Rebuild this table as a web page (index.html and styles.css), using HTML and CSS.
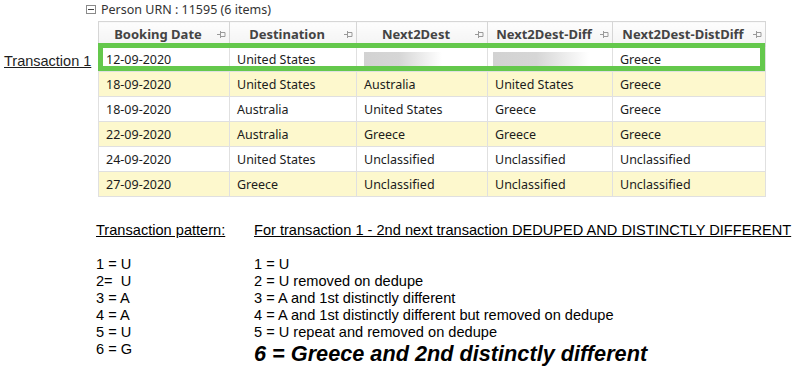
FILE: index.html
```html
<!DOCTYPE html>
<html lang="en">
<head>
    <meta charset="UTF-8">
    <meta name="viewport" content="width=device-width, initial-scale=1.0">
    <title>Transaction pattern</title>
    <link rel="stylesheet" href="styles.css">
</head>
<body>
    <div class="top">
        <div class="side">
            <span class="tx-label">Transaction 1</span>
        </div>
        <div class="main">
            <div class="group-head">
                <span class="toggle"></span>
                <span>Person URN : 11595 (6 items)</span>
            </div>

            <div class="grid-wrap">
                <table class="grid">
                    <colgroup>
                        <col style="width: 131px">
                        <col style="width: 127px">
                        <col style="width: 131px">
                        <col style="width: 125px">
                        <col style="width: 153px">
                    </colgroup>
                    <thead>
                        <tr>
                            <th><div class="th-in"><span>Booking Date</span><svg class="pin" width="9" height="7" viewBox="0 0 9 7"><path d="M0 3.5h3M3.5 0v7M4 1.5h4v4H4" fill="none" stroke="#9a9a9a" stroke-width="1"/></svg></div></th>
                            <th><div class="th-in"><span>Destination</span><svg class="pin" width="9" height="7" viewBox="0 0 9 7"><path d="M0 3.5h3M3.5 0v7M4 1.5h4v4H4" fill="none" stroke="#9a9a9a" stroke-width="1"/></svg></div></th>
                            <th><div class="th-in"><span>Next2Dest</span><svg class="pin" width="9" height="7" viewBox="0 0 9 7"><path d="M0 3.5h3M3.5 0v7M4 1.5h4v4H4" fill="none" stroke="#9a9a9a" stroke-width="1"/></svg></div></th>
                            <th><div class="th-in"><span>Next2Dest-Diff</span><svg class="pin" width="9" height="7" viewBox="0 0 9 7"><path d="M0 3.5h3M3.5 0v7M4 1.5h4v4H4" fill="none" stroke="#9a9a9a" stroke-width="1"/></svg></div></th>
                            <th><div class="th-in"><span>Next2Dest-DistDiff</span><svg class="pin" width="9" height="7" viewBox="0 0 9 7"><path d="M0 3.5h3M3.5 0v7M4 1.5h4v4H4" fill="none" stroke="#9a9a9a" stroke-width="1"/></svg></div></th>
                        </tr>
                    </thead>
                    <tbody>
                        <tr>
                            <td>12-09-2020</td>
                            <td>United States</td>
                            <td><span class="redacted"></span></td>
                            <td class="tight"><span class="redacted wide"></span></td>
                            <td>Greece</td>
                        </tr>
                        <tr class="alt">
                            <td>18-09-2020</td>
                            <td>United States</td>
                            <td>Australia</td>
                            <td>United States</td>
                            <td>Greece</td>
                        </tr>
                        <tr>
                            <td>18-09-2020</td>
                            <td>Australia</td>
                            <td>United States</td>
                            <td>Greece</td>
                            <td>Greece</td>
                        </tr>
                        <tr class="alt">
                            <td>22-09-2020</td>
                            <td>Australia</td>
                            <td>Greece</td>
                            <td>Greece</td>
                            <td>Greece</td>
                        </tr>
                        <tr>
                            <td>24-09-2020</td>
                            <td>United States</td>
                            <td>Unclassified</td>
                            <td>Unclassified</td>
                            <td>Unclassified</td>
                        </tr>
                        <tr class="alt">
                            <td>27-09-2020</td>
                            <td>Greece</td>
                            <td>Unclassified</td>
                            <td>Unclassified</td>
                            <td>Unclassified</td>
                        </tr>
                    </tbody>
                </table>
                <!-- highlight drawn over transaction 1 -->
                <div class="highlight"></div>
            </div>
        </div>
    </div>

    <div class="notes">
        <div class="col-left">
            <p class="head">Transaction pattern:</p>
            <p>&nbsp;</p>
            <p>1 = U</p>
            <p>2=&nbsp; U</p>
            <p>3 = A</p>
            <p>4 = A</p>
            <p>5 = U</p>
            <p>6 = G</p>
        </div>
        <div class="col-right">
            <p class="head">For transaction 1 - 2nd next transaction DEDUPED AND DISTINCTLY DIFFERENT</p>
            <p>&nbsp;</p>
            <p>1 = U</p>
            <p>2 = U removed on dedupe</p>
            <p>3 = A and 1st distinctly different</p>
            <p>4 = A and 1st distinctly different but removed on dedupe</p>
            <p>5 = U repeat and removed on dedupe</p>
            <p class="big">6 = Greece and 2nd distinctly different</p>
        </div>
    </div>
</body>
</html>
```

FILE: styles.css
```css
* {
    margin: 0;
    padding: 0;
    box-sizing: border-box;
}

body {
    font-family: "Noto Sans", "Open Sans", sans-serif;
    color: #222;
    background: #fff;
}

.top {
    display: flex;
}

.side {
    width: 98px;
    padding: 49px 0 0 4px;
}

.tx-label {
    font-family: "Liberation Sans", Arial, sans-serif;
    font-size: 14.5px;
    color: #1e1e1e;
    text-decoration: underline;
}

.group-head {
    margin-left: -12px;
    height: 21px;
    display: flex;
    align-items: center;
    gap: 5px;
    font-size: 12.5px;
    color: #333;
    padding-bottom: 2px;
}

.toggle {
    width: 10px;
    height: 9px;
    border: 1px solid #8a8a8a;
    position: relative;
}

.toggle::after {
    content: "";
    position: absolute;
    left: 1px;
    right: 1px;
    top: 3px;
    height: 1px;
    background: #444;
}

.grid-wrap {
    position: relative;
    width: 667px;
}

.grid {
    width: 667px;
    table-layout: fixed;
    border-collapse: collapse;
    font-size: 12.5px;
    border: 1px solid #d9d9d9;
}

.grid th {
    height: 25px;
    padding: 0 3px 0 4px;
    background: linear-gradient(#fdfdfd, #f3f3f3);
    border: 1px solid #d6d6d6;
    font-size: 13px;
    font-weight: 700;
    color: #444;
}

.th-in {
    display: flex;
    align-items: center;
}

.th-in span {
    flex: 1;
    text-align: center;
    padding-right: 4px;
}

.pin {
    flex: none;
}

.grid td {
    height: 25px;
    padding: 0 7px;
    border: 1px solid #e0e0e0;
    white-space: nowrap;
    color: #1c1c1c;
}

.grid td.tight {
    padding-left: 5px;
}

.grid tr.alt td {
    background: #fdf8cd;
}

.redacted {
    display: block;
    width: 78px;
    height: 15px;
    background: linear-gradient(to right, #d2d2d2 0%, #d6d6d6 45%, #fff 100%);
}

.redacted.wide {
    width: 96px;
}

.highlight {
    position: absolute;
    left: 0;
    top: 22px;
    width: 667px;
    height: 28px;
    border: 5px solid #64c84c;
    pointer-events: none;
}

.notes {
    display: flex;
    padding: 221px 0 0 96px;
    margin-top: -196px;
    font-family: "Liberation Sans", Arial, sans-serif;
    font-size: 14.6px;
    line-height: 17px;
    color: #000;
}

.col-left {
    width: 158px;
}

.head {
    text-decoration: underline;
}

.big {
    font-size: 21.7px;
    font-weight: 700;
    font-style: italic;
    line-height: 25px;
}
```
